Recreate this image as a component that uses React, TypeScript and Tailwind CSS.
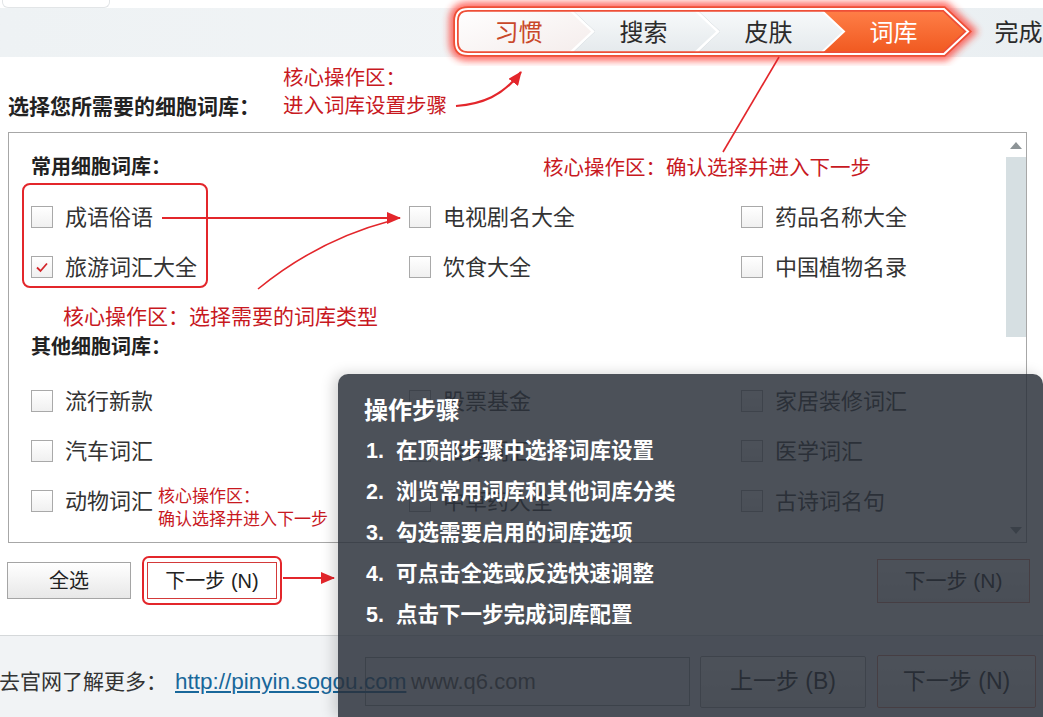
import React from "react";

type Entry = { label: string; checked?: boolean };

const commonRows: Entry[][] = [
  [{ label: "成语俗语" }, { label: "电视剧名大全" }, { label: "药品名称大全" }],
  [{ label: "旅游词汇大全", checked: true }, { label: "饮食大全" }, { label: "中国植物名录" }],
];

const otherRows: Entry[][] = [
  [{ label: "流行新款" }, { label: "股票基金" }, { label: "家居装修词汇" }],
  [{ label: "汽车词汇" }, { label: "法律词汇" }, { label: "医学词汇" }],
  [{ label: "动物词汇" }, { label: "中草药大全" }, { label: "古诗词名句" }],
];

const steps = [
  { label: "习惯", cls: "text-[#c9482a]" },
  { label: "搜索", cls: "text-[#2b2b2b]" },
  { label: "皮肤", cls: "text-[#2b2b2b]" },
  { label: "词库", cls: "text-white" },
  { label: "完成", cls: "text-[#2b2b2b]" },
];

const guide = [
  "在顶部步骤中选择词库设置",
  "浏览常用词库和其他词库分类",
  "勾选需要启用的词库选项",
  "可点击全选或反选快速调整",
  "点击下一步完成词库配置",
];

function CheckBox({ checked = false }: { checked?: boolean }) {
  return (
    <span className="flex h-[22px] w-[22px] shrink-0 items-center justify-center border border-[#a9a9a9] bg-gradient-to-b from-white to-[#f0f0f0]">
      {checked && (
        <svg width="16" height="16" viewBox="0 0 16 16">
          <path d="M3 8.5 L6.5 12 L13 4.5" fill="none" stroke="#d3262b" strokeWidth="1.8" />
        </svg>
      )}
    </span>
  );
}

function Item({ label, checked }: Entry) {
  return (
    <label className="flex h-[50px] items-center gap-3 text-[22px] text-[#333]">
      <CheckBox checked={checked} />
      <span className="whitespace-nowrap">{label}</span>
    </label>
  );
}

function Rows({ rows }: { rows: Entry[][] }) {
  return (
    <div className="grid grid-cols-[378px_332px_1fr]">
      {rows.flat().map((e) => (
        <Item key={e.label} {...e} />
      ))}
    </div>
  );
}

function StepFrame() {
  const outline = "M 28 9 L 504 9 L 528 31.5 L 504 54 L 28 54 Q 16 54 16 42 L 16 21 Q 16 9 28 9 Z";
  return (
    <svg className="absolute left-[440px] top-[-8px] z-0" width="545" height="66" viewBox="0 0 545 66">
      <defs>
        <linearGradient id="bar" x1="0" y1="0" x2="0" y2="1">
          <stop offset="0" stopColor="#f8fafb" />
          <stop offset="1" stopColor="#e4e9ec" />
        </linearGradient>
        <linearGradient id="first" x1="0" y1="0" x2="1" y2="1">
          <stop offset="0" stopColor="#ffffff" />
          <stop offset="1" stopColor="#f4eceb" />
        </linearGradient>
        <linearGradient id="active" x1="0" y1="0" x2="0" y2="1">
          <stop offset="0" stopColor="#ff8049" />
          <stop offset="1" stopColor="#f0581f" />
        </linearGradient>
        <filter id="glow" x="-10%" y="-50%" width="120%" height="200%">
          <feGaussianBlur stdDeviation="3.5" />
        </filter>
      </defs>
      <path d={outline} fill="none" stroke="#ff3326" strokeWidth="14" opacity="0.7" filter="url(#glow)" />
      <path d={outline} fill="url(#bar)" />
      <path d="M 28 9 L 129 9 L 153 31.5 L 129 54 L 28 54 Q 16 54 16 42 L 16 21 Q 16 9 28 9 Z" fill="url(#first)" />
      <path d="M 380 9 L 504 9 L 528 31.5 L 504 54 L 380 54 L 404 31.5 Z" fill="url(#active)" />
      {[129, 254].map((x) => (
        <g key={x}>
          <polyline points={`${x + 2},9 ${x + 26},31.5 ${x + 2},54`} fill="none" stroke="#d8dee2" strokeWidth="1" />
          <polyline points={`${x},9 ${x + 24},31.5 ${x},54`} fill="none" stroke="#ffffff" strokeWidth="2.5" />
        </g>
      ))}
      <polyline points="380,9 404,31.5 380,54" fill="none" stroke="#ffffff" strokeWidth="2" />
      <path d={outline} fill="none" stroke="#ee4f37" strokeWidth="5.5" />
      <path d={outline} fill="none" stroke="#ffffff" strokeWidth="2" />
    </svg>
  );
}

function Notes() {
  const red = "#e3262b";
  return (
    <>
      <svg className="pointer-events-none absolute inset-0 z-20" width="1043" height="717">
        <defs>
          <marker id="head" markerWidth="14" markerHeight="12" refX="13" refY="6" orient="auto" markerUnits="userSpaceOnUse">
            <path d="M0 0 L14 6 L0 12 Z" fill={red} />
          </marker>
        </defs>
        <g fill="none" stroke={red}>
          <path d="M 456 106 C 482 104 503 96 521 72" strokeWidth="2.2" markerEnd="url(#head)" />
          <path d="M 779 57 L 723 152" strokeWidth="1.6" />
          <path d="M 162 218 L 400 218" strokeWidth="2" markerEnd="url(#head)" />
          <path d="M 258 289 Q 318 240 390 221" strokeWidth="1.6" />
          <path d="M 283 578 L 334 578" strokeWidth="2" markerEnd="url(#head)" />
        </g>
      </svg>
      <div className="pointer-events-none absolute left-[22px] top-[183px] z-20 h-[105px] w-[186px] rounded-[8px] border-2 border-[#e3262b]" />
      <div className="absolute left-[283px] top-[64px] z-20 text-[20.5px] leading-[28px] text-[#c8191f]">
        <div>核心操作区：</div>
        <div>进入词库设置步骤</div>
      </div>
      <div className="absolute left-[543px] top-[154px] z-20 text-[20.5px] leading-[28px] text-[#c8191f]">
        核心操作区：确认选择并进入下一步
      </div>
      <div className="absolute left-[63px] top-[303px] z-20 text-[21px] leading-[28px] text-[#c8191f]">
        核心操作区：选择需要的词库类型
      </div>
      <div className="absolute left-[158px] top-[485px] z-20 text-[17px] leading-[23px] text-[#c8191f]">
        <div>核心操作区：</div>
        <div>确认选择并进入下一步</div>
      </div>
    </>
  );
}

export default function App() {
  return (
    <div className="relative h-[717px] w-[1043px] overflow-hidden bg-white font-['Liberation_Sans','Noto_Sans_CJK_SC',sans-serif] text-[#333]">
      {/* window top edge with the tab stub */}
      <div className="h-2 bg-white">
        <div className="ml-[2px] h-2 w-[108px] rounded-b-[6px] border-x border-b border-[#e2e5e7]" />
      </div>

      {/* wizard steps */}
      <div className="relative h-[49px] bg-gradient-to-r from-[#eef2f4] via-[#f1f4f6] to-[#eaeff2]">
        <StepFrame />
        <div className="relative z-10 flex h-full pl-[456px]">
          {steps.map((s) => (
            <div key={s.label} className={`flex h-full w-[125px] shrink-0 items-center justify-center text-[24px] ${s.cls}`}>
              {s.label}
            </div>
          ))}
        </div>
      </div>

      <div className="pl-[8px] pr-[8px]">
        <h1 className="mt-[36px] text-[21px] font-bold leading-[28px] text-[#222]">选择您所需要的细胞词库：</h1>

        <div className="mt-[11px] flex h-[411px] w-[1019px] border border-[#a7a7a7]">
          <div className="flex-1 pl-[22px] pt-[20px]">
            <div className="text-[20px] font-bold leading-[28px] text-[#222]">常用细胞词库：</div>
            <div className="mt-[11px]">
              <Rows rows={commonRows} />
            </div>
            <div className="mt-[41px] text-[20px] font-bold leading-[28px] text-[#222]">其他细胞词库：</div>
            <div className="mt-[15px]">
              <Rows rows={otherRows} />
            </div>
          </div>
          <div className="flex w-[20px] flex-col bg-white">
            <div className="flex h-[24px] items-center justify-center">
              <svg width="12" height="7" viewBox="0 0 12 7">
                <path d="M0 7 L6 0 L12 7 Z" fill="#8d9497" />
              </svg>
            </div>
            <div className="h-[180px] bg-[#d6dfe2]" />
            <div className="flex-1" />
            <div className="flex h-[24px] items-center justify-center">
              <svg width="12" height="7" viewBox="0 0 12 7">
                <path d="M0 0 L12 0 L6 7 Z" fill="#8d9497" />
              </svg>
            </div>
          </div>
        </div>

        <div className="mt-[13px] flex h-[49px] items-center">
          <button className="ml-[-1px] h-[37px] w-[124px] border border-[#a5a5a5] bg-gradient-to-b from-white to-[#e8e8e8] text-[20px] text-[#222]">
            全选
          </button>
          <div className="ml-[11px] rounded-[7px] border-2 border-[#e3262b] px-[3px] py-[4px]">
            <button className="h-[37px] w-[130px] border border-[#d33a3a] bg-white text-[20px] text-[#222]">下一步 (N)</button>
          </div>
          <button className="ml-auto mr-[5px] h-[44px] w-[153px] border border-[#d88a78] bg-gradient-to-b from-white to-[#ececec] text-[21px] text-[#222]">
            下一步 (N)
          </button>
        </div>
      </div>

      {/* footer */}
      <div className="mt-[30px] flex h-[82px] items-center border-t border-[#d5d8da] bg-[#f1f3f5] pt-[10px]">
        <span className="ml-[-1px] whitespace-nowrap text-[21px] text-[#333]">去官网了解更多：</span>
        <span className="relative z-10 ml-[8px] inline-block w-[233px] whitespace-nowrap text-[22.5px] text-[#19679a] underline">
          http://pinyin.sogou.com
        </span>
        <div className="ml-[-43px] flex h-[49px] w-[325px] shrink-0 items-center border border-[#9aa0a4] pl-[45px] text-[22px] text-[#555]">
          www.q6.com
        </div>
        <button className="ml-[10px] h-[52px] w-[166px] shrink-0 rounded-[2px] border border-[#a8a8a8] bg-gradient-to-b from-white to-[#ebebeb] text-[23px] text-[#222]">
          上一步 (B)
        </button>
        <button className="ml-[11px] h-[53px] w-[159px] shrink-0 rounded-[2px] border border-[#d88a78] bg-gradient-to-b from-white to-[#ebebeb] text-[23px] text-[#222]">
          下一步 (N)
        </button>
      </div>

      <Notes />

      {/* step guide panel */}
      <div className="absolute bottom-0 left-[338px] right-0 top-[374px] z-30 rounded-t-[10px] bg-[rgba(42,48,57,0.84)] pl-[26px] pt-[16px] text-white shadow-[-4px_0_14px_rgba(0,0,0,0.18)]">
        <div className="text-[24px] font-bold leading-[41px]">操作步骤</div>
        {guide.map((g, i) => (
          <div key={g} className="flex text-[21.5px] font-semibold leading-[41px]">
            <span className="w-[32px] pl-[2px]">{i + 1}.</span>
            <span>{g}</span>
          </div>
        ))}
      </div>
    </div>
  );
}
